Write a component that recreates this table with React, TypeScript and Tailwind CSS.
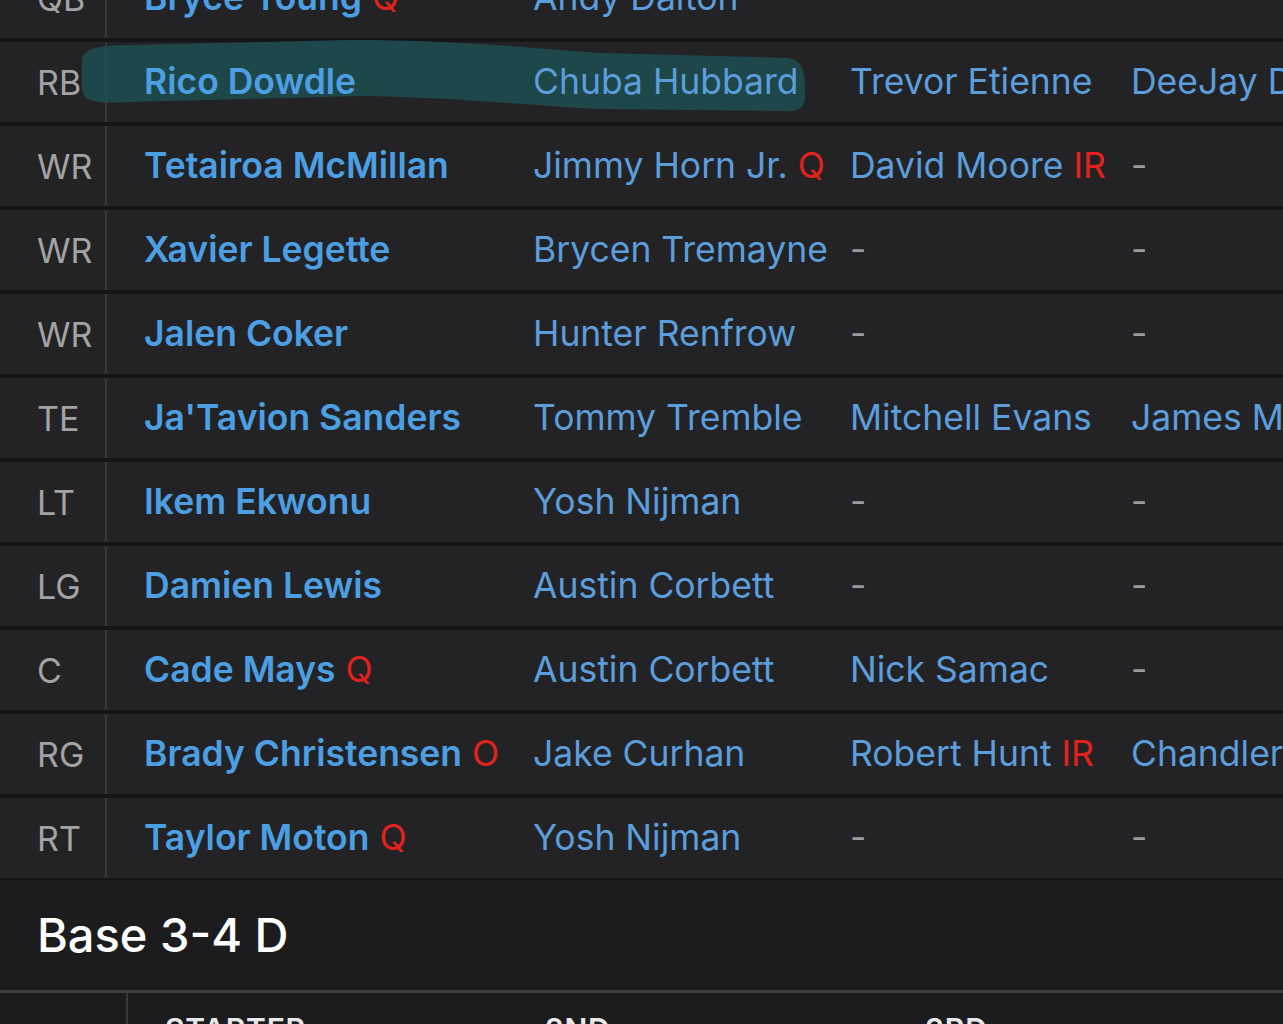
import React from "react";

type Cell = { name: string; tag?: string };

type Row = { pos: string; players: Cell[] };

const rows: Row[] = [
  { pos: "QB", players: [{ name: "Bryce Young", tag: "Q" }, { name: "Andy Dalton" }, { name: "-" }, { name: "-" }] },
  { pos: "RB", players: [{ name: "Rico Dowdle" }, { name: "Chuba Hubbard" }, { name: "Trevor Etienne" }, { name: "DeeJay Dallas" }] },
  { pos: "WR", players: [{ name: "Tetairoa McMillan" }, { name: "Jimmy Horn Jr.", tag: "Q" }, { name: "David Moore", tag: "IR" }, { name: "-" }] },
  { pos: "WR", players: [{ name: "Xavier Legette" }, { name: "Brycen Tremayne" }, { name: "-" }, { name: "-" }] },
  { pos: "WR", players: [{ name: "Jalen Coker" }, { name: "Hunter Renfrow" }, { name: "-" }, { name: "-" }] },
  { pos: "TE", players: [{ name: "Ja'Tavion Sanders" }, { name: "Tommy Tremble" }, { name: "Mitchell Evans" }, { name: "James Mitchell" }] },
  { pos: "LT", players: [{ name: "Ikem Ekwonu" }, { name: "Yosh Nijman" }, { name: "-" }, { name: "-" }] },
  { pos: "LG", players: [{ name: "Damien Lewis" }, { name: "Austin Corbett" }, { name: "-" }, { name: "-" }] },
  { pos: "C", players: [{ name: "Cade Mays", tag: "Q" }, { name: "Austin Corbett" }, { name: "Nick Samac" }, { name: "-" }] },
  { pos: "RG", players: [{ name: "Brady Christensen", tag: "O" }, { name: "Jake Curhan" }, { name: "Robert Hunt", tag: "IR" }, { name: "Chandler Zavala" }] },
  { pos: "RT", players: [{ name: "Taylor Moton", tag: "Q" }, { name: "Yosh Nijman" }, { name: "-" }, { name: "-" }] },
];

function Player({ cell, starter }: { cell: Cell; starter?: boolean }) {
  if (cell.name === "-") {
    return <span className="relative z-10 text-[#9c9c9e]">-</span>;
  }
  return (
    <span
      className={
        starter
          ? "relative z-10 font-semibold text-[#4c9fe2]"
          : "relative z-10 text-[#5c9ddc]"
      }
    >
      {cell.name}
      {cell.tag && <span className="font-normal text-[#e3211d]"> {cell.tag}</span>}
    </span>
  );
}

function DepthRow({ row }: { row: Row }) {
  return (
    <div className="flex h-[80px] items-stretch bg-[#232325] whitespace-nowrap">
      <div className="flex w-[107px] shrink-0 items-center border-r-2 border-[#38383a] pl-[37px] text-[34px] text-[#a3a3a5]">
        <span className="relative z-10">{row.pos}</span>
      </div>
      <div className="flex w-[426px] shrink-0 items-center pl-[37px]">
        <Player cell={row.players[0]} starter />
      </div>
      <div className="flex w-[317px] shrink-0 items-center">
        <Player cell={row.players[1]} />
      </div>
      <div className="flex w-[281px] shrink-0 items-center">
        <Player cell={row.players[2]} />
      </div>
      <div className="flex flex-1 items-center">
        <Player cell={row.players[3]} />
      </div>
    </div>
  );
}

export default function App() {
  return (
    <div
      className="relative h-[1024px] w-[1283px] overflow-hidden bg-[#1c1c1e] text-[35.5px]"
      style={{ fontFamily: "Inter, 'Noto Sans', sans-serif" }}
    >
      <div className="-mt-[42px] flex flex-col gap-[4px] bg-[#161618] pb-[2px]">
        {rows.map((r, i) => (
          <DepthRow key={i} row={r} />
        ))}
      </div>

      {/* marker highlight over the RB row, under the text */}
      <svg
        className="pointer-events-none absolute left-0 top-0"
        width="1283"
        height="140"
        viewBox="0 0 1283 140"
      >
        <path
          d="M82,60 C83,49 98,45 130,45 L350,40 C450,40 520,47 600,53 L788,58 C802,60 806,70 805,98 C804,110 796,112 780,111 L600,109 C520,105 450,97 360,96 L130,102 C96,104 83,101 82,90 Z"
          fill="#1d4e50"
          opacity="0.85"
        />
      </svg>

      <div className="flex h-[110px] items-center pl-[37px] text-[47px] font-medium text-white">
        Base 3-4 D
      </div>
      <div className="h-[3px] bg-[#3e3e40]" />
      <div className="flex h-[40px] items-stretch whitespace-nowrap text-[30px] font-semibold tracking-wide text-[#e8e8ea]">
        <div className="w-[128px] shrink-0 border-r-2 border-[#38383a]" />
        <div className="w-[417px] shrink-0 pl-[37px] pt-[14px]">STARTER</div>
        <div className="w-[380px] shrink-0 pt-[14px]">2ND</div>
        <div className="w-[353px] shrink-0 pt-[14px]">3RD</div>
        <div className="pt-[14px]">4TH</div>
      </div>
    </div>
  );
}
